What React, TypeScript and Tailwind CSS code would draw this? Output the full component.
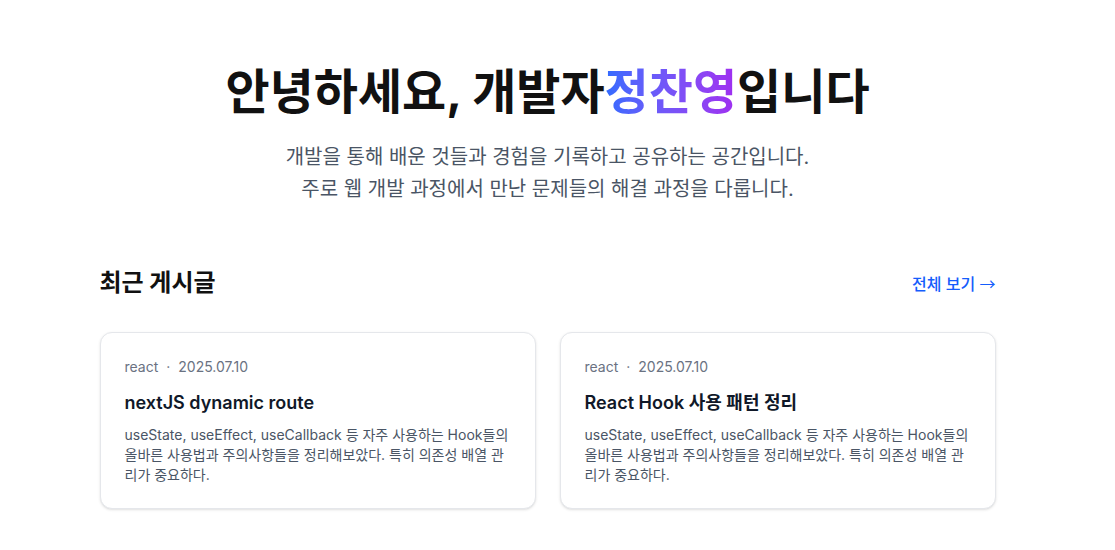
import React from 'react';

const posts = [
  {
    category: 'react',
    date: '2025.07.10',
    title: 'nextJS dynamic route',
    excerpt:
      'useState, useEffect, useCallback 등 자주 사용하는 Hook들의 올바른 사용법과 주의사항들을 정리해보았다. 특히 의존성 배열 관리가 중요하다.',
  },
  {
    category: 'react',
    date: '2025.07.10',
    title: 'React Hook 사용 패턴 정리',
    excerpt:
      'useState, useEffect, useCallback 등 자주 사용하는 Hook들의 올바른 사용법과 주의사항들을 정리해보았다. 특히 의존성 배열 관리가 중요하다.',
  },
];

const PostCard: React.FC<(typeof posts)[number]> = ({ category, date, title, excerpt }) => {
  return (
    <div className="bg-white rounded-xl border border-gray-200 shadow-sm p-6 h-[177px]">
      <div className="text-sm text-gray-500">
        {category}
        <span className="mx-2">·</span>
        {date}
      </div>
      <h3 className="text-lg font-semibold text-gray-900 mt-3">{title}</h3>
      <p className="text-sm text-gray-600 mt-2 leading-5">{excerpt}</p>
    </div>
  );
};

export default function App() {
  return (
    <div
      className="min-h-screen bg-white pr-5"
      style={{ fontFamily: 'Inter, "Noto Sans CJK KR", sans-serif' }}
    >
      <main className="max-w-[896px] mx-auto">
        <section className="text-center pt-[58px]">
          <h1 className="text-5xl font-bold text-[#111] leading-[68px]">
            안녕하세요, 개발자
            <span className="bg-gradient-to-r from-[#2f6bff] to-[#a02cf0] bg-clip-text text-transparent">
              정찬영
            </span>
            입니다
          </h1>
          <p className="text-xl text-gray-600 leading-8 mt-[15px]">
            개발을 통해 배운 것들과 경험을 기록하고 공유하는 공간입니다.
            <br />
            주로 웹 개발 과정에서 만난 문제들의 해결 과정을 다룹니다.
          </p>
        </section>

        <section className="mt-[62px]">
          <div className="flex items-center justify-between mb-[33px]">
            <h2 className="text-2xl font-bold text-[#111]">최근 게시글</h2>
            <a className="text-base font-medium text-blue-600">
              전체 보기 <span className="font-['Noto_Sans_CJK_KR',sans-serif] font-normal">→</span>
            </a>
          </div>
          <div className="grid grid-cols-2 gap-6">
            {posts.map((post) => (
              <PostCard key={post.title} {...post} />
            ))}
          </div>
        </section>
      </main>
    </div>
  );
}
